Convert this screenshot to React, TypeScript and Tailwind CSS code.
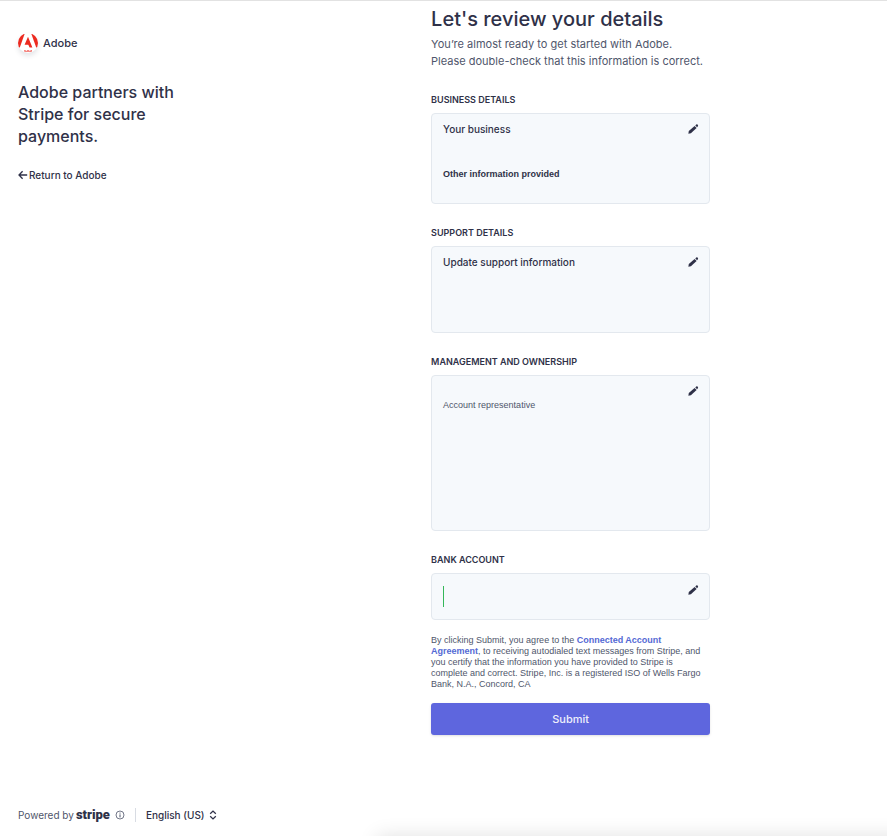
import React, { useState } from "react";

const PencilIcon = () => (
  <svg viewBox="0 0 12 12" className="h-3 w-3" fill="currentColor" aria-hidden="true">
    <path d="M1.4 10.8 1.8 8.1 7.6 2.9 9.6 4.9 3.9 10.3Z" />
    <path d="M8.3 2.4 9.2 1.6Q10 1 10.8 1.7 11.4 2.5 10.9 3.3L10.1 4.2Z" />
  </svg>
);

const AdobeLogo = () => (
  <span className="block h-5 w-5 overflow-hidden rounded-full bg-white shadow-[0_3px_5px_rgba(60,66,87,0.14)]">
    <svg viewBox="0 0 20 20" className="h-5 w-5" fill="#ec2a20" aria-hidden="true">
      <path d="M6.6 1 1.8 14.4H0V1Z" />
      <path d="M13.4 1 18.2 14.4H20V1Z" />
      <path d="M10 3.8 14.4 14.5H11.6L10.3 11.7H6.6Z" />
      <path d="M6.3 17.1H7.6V18H8.8V17.3H11.3V18H12.5V17.1H13.8V18.8H6.3Z" opacity="0.75" />
    </svg>
  </span>
);

interface DetailSectionProps {
  title: string;
  editLabel: string;
  className: string;
  children?: React.ReactNode;
}

const DetailSection = ({ title, editLabel, className, children }: DetailSectionProps) => (
  <section>
    <h2 className="mb-[6px] text-[9px] font-semibold uppercase leading-[14px]">{title}</h2>
    <div
      className={`flex items-start justify-between rounded-[4px] border border-[#e3e8ee] bg-[#f6f9fc] pl-[11px] pr-[10px] ${className}`}
    >
      <div>{children}</div>
      <button type="button" aria-label={editLabel} className="mt-px cursor-pointer">
        <PencilIcon />
      </button>
    </div>
  </section>
);

const App = () => {
  const [language, setLanguage] = useState("en-US");

  return (
    <div className="relative flex min-h-screen border-t border-[#e2e2e2] bg-white font-['Inter','Liberation_Sans',sans-serif] text-[#2f3148]">
      {/* Sidebar */}
      <aside className="flex w-[48.6%] shrink-0 flex-col pb-[11px] pl-[18px] pt-8">
        <div className="flex items-center gap-[5px]">
          <AdobeLogo />
          <span className="text-[11px] font-medium leading-5">Adobe</span>
        </div>
        <p className="mt-7 w-44 text-[16px] font-medium leading-[22px]">
          Adobe partners with Stripe for secure payments.
        </p>
        <a href="#return" className="mt-[18px] flex items-center gap-px text-[10px] font-medium leading-5">
          <svg viewBox="0 0 10 10" className="h-[10px] w-[10px]" fill="none" stroke="currentColor" strokeWidth="1.3" aria-hidden="true">
            <path d="M4.6 1.2 1 5 4.6 8.8M1.2 5H9.2" />
          </svg>
          Return to Adobe
        </a>

        <footer className="mt-auto flex items-center text-[10px] leading-5">
          <span className="text-[#4f566b]">Powered by</span>
          <span className="ml-[2px] font-['Roboto',sans-serif] text-[13px] font-black leading-5">stripe</span>
          <button type="button" aria-label="About Stripe" className="ml-[5px] cursor-pointer text-[#4f566b]">
            <svg viewBox="0 0 10 10" className="h-[10px] w-[10px]" fill="none" stroke="currentColor" strokeWidth="0.8" aria-hidden="true">
              <circle cx="5" cy="5" r="4" />
              <path d="M5 4.4V7.4M5 2.6V3.6" strokeWidth="1" />
            </svg>
          </button>
          <span className="mx-[10px] h-[14px] w-px bg-[#d8dce3]" />
          <div className="flex items-center gap-1">
            <select
              aria-label="Language"
              value={language}
              onChange={(e) => setLanguage(e.target.value)}
              className="h-5 cursor-pointer appearance-none bg-transparent font-medium leading-5"
            >
              <option value="en-US">English (US)</option>
            </select>
            <svg viewBox="0 0 8 10" className="h-[10px] w-2" fill="none" stroke="currentColor" strokeWidth="1.3" aria-hidden="true">
              <path d="M1.2 3.8 4 1.1 6.8 3.8M1.2 6.2 4 8.9 6.8 6.2" />
            </svg>
          </div>
        </footer>
      </aside>

      {/* Review form */}
      <main className="w-full max-w-[279px] pb-8 pt-[5px]">
        <h1 className="text-[20px] font-medium leading-[26px]">Let's review your details</h1>
        <p className="mt-[4px] text-[11px] leading-[17px] text-[#4f566b]">
          You’re almost ready to get started with Adobe.
          <br />
          Please double-check that this information is correct.
        </p>

        <div className="mt-[23px] flex flex-col gap-[22px]">
          <DetailSection title="Business details" editLabel="Edit business details" className="min-h-[91px] py-2">
            <h3 className="text-[10px] font-medium leading-[14px]">Your business</h3>
            <p className="mt-8 font-['Liberation_Sans',sans-serif] text-[9px] font-bold leading-3">
              Other information provided
            </p>
          </DetailSection>

          <DetailSection title="Support details" editLabel="Edit support details" className="min-h-[87px] py-2">
            <h3 className="text-[10px] font-medium leading-[14px]">Update support information</h3>
          </DetailSection>

          <DetailSection title="Management and ownership" editLabel="Edit management and ownership" className="min-h-[156px] py-2">
            <p className="mt-[15px] font-['Liberation_Sans',sans-serif] text-[9px] leading-3 text-[#4f566b]">
              Account representative
            </p>
          </DetailSection>

          <DetailSection title="Bank account" editLabel="Edit bank account" className="min-h-[47px] py-[9px]">
            <span className="mt-[3px] block h-[21px] w-px bg-[#34b759]" />
          </DetailSection>
        </div>

        <p className="mt-[15px] font-['Liberation_Sans',sans-serif] text-[9px] leading-[11px] text-[#4f566b]">
          By clicking Submit, you agree to the{" "}
          <a href="#agreement" className="font-bold text-[#5469d4]">
            Connected Account Agreement
          </a>
          , to receiving autodialed text messages from Stripe, and you certify that the information you have provided to
          Stripe is complete and correct. Stripe, Inc. is a registered ISO of Wells Fargo Bank, N.A., Concord, CA
        </p>

        <button
          type="submit"
          className="mt-[13px] h-8 w-full cursor-pointer rounded-[3px] bg-[#5e66de] text-[11px] font-medium text-[#eeeffc] shadow-sm"
        >
          Submit
        </button>
      </main>

      {/* Soft shade along the bottom edge */}
      <div className="pointer-events-none absolute bottom-0 left-[38%] right-0 h-6 overflow-hidden">
        <div className="-mr-8 ml-10 mt-6 h-6 shadow-[0_0_20px_rgba(0,0,0,0.12)]" />
      </div>
    </div>
  );
};

export default App;
